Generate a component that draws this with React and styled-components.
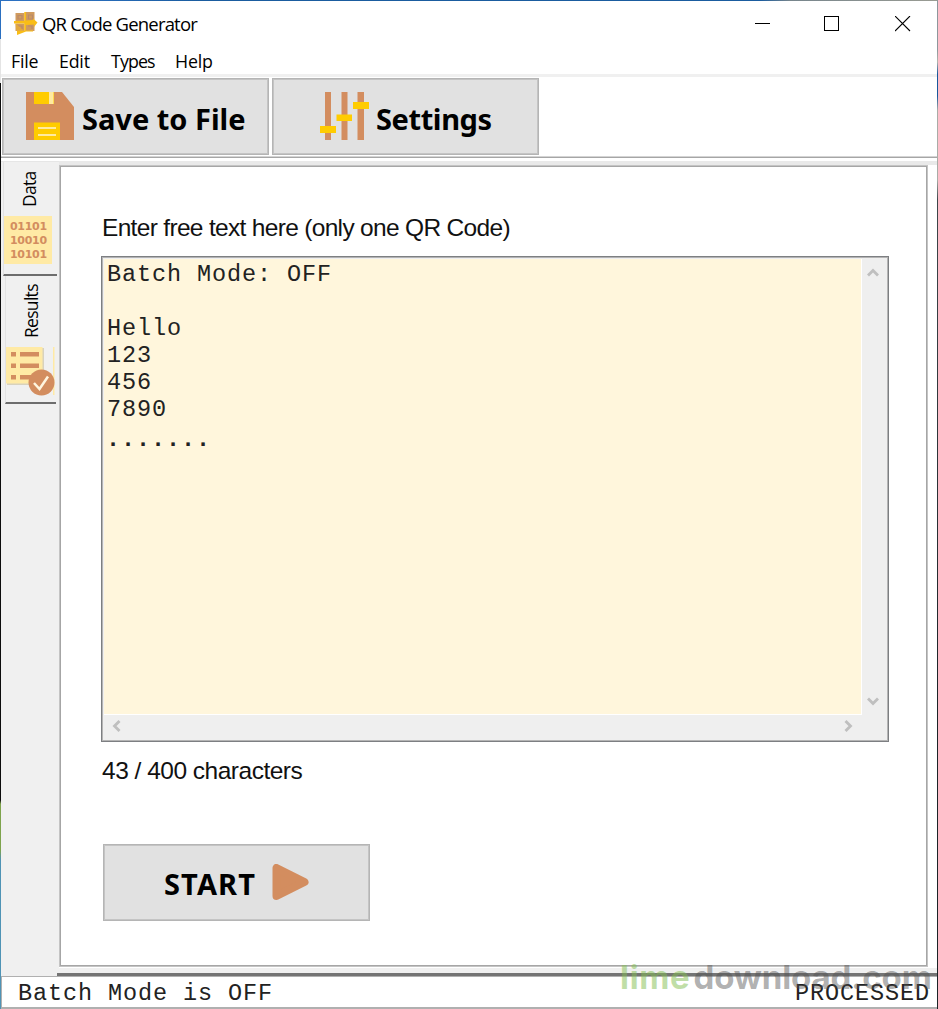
import React from "react";
import styled, { createGlobalStyle } from "styled-components";

const GlobalStyle = createGlobalStyle`
  * {
    box-sizing: border-box;
  }
  body {
    margin: 0;
    overflow: hidden;
  }
`;

const ui = `"Open Sans", "Noto Sans", sans-serif`;
const uiBold = `"Noto Sans", "Open Sans", sans-serif`;
const mono = `"Liberation Mono", "Courier New", monospace`;
const copper = "#d38d5f";
const gold = "#ffcc00";
const sand = "#ffeaa5";

const Desktop = styled.div`
  position: relative;
  width: 938px;
  height: 1009px;
  padding: 1px 1px 0;
  background:
    linear-gradient(
        #2a6fc0 0 39px,
        #e4e4e4 39px 83px,
        #0c0c0c 83px 800px,
        #7ea34c 804px 850px,
        #4f93b5 860px
      )
      left / 1px 100% no-repeat,
    linear-gradient(
        #8d979c 0 50px,
        #b4b5ae 62px,
        #19589b 74px 96px,
        #a9aca7 110px 180px,
        #3c4549 200px,
        #1c2327 700px
      )
      right / 1px 100% no-repeat,
    linear-gradient(90deg, #2b70c1 0 65px, #1a5c9f 200px 760px, #77858c 790px, #9a9c93)
      top / 100% 1px no-repeat;
`;

const Window = styled.div`
  display: flex;
  flex-direction: column;
  height: 100%;
  background: #fff;
  color: #000;
`;

const TitleBar = styled.header`
  display: flex;
  align-items: center;
  height: 46px;
  padding: 0 24px 0 12px;
`;

const Title = styled.h1`
  flex: 1;
  margin: 1px 0 0 4px;
  font: 400 18.5px/26px ${ui};
  letter-spacing: -0.8px;
`;

const WindowButtons = styled.div`
  display: flex;
  gap: 53px;
  padding-right: 2px;

  svg:last-child {
    margin-left: 2px;
  }
`;

const MenuBar = styled.nav`
  display: flex;
  height: 30px;
  padding: 1px 0 0 10px;
  gap: 20px;
  border-bottom: 3px solid #f0f0f0;
`;

const MenuItem = styled.span`
  width: ${(p) => p.$width}px;
  margin-left: ${(p) => p.$shift || 0}px;
  font: 400 17.8px/27px ${ui};
  letter-spacing: ${(p) => p.$tracking || -0.2}px;
  white-space: nowrap;
`;

const ToolBar = styled.div`
  display: flex;
  gap: 3px;
  height: 81px;
  padding: 1px;
  border-bottom: 1px solid #a6a6a6;
  box-shadow: inset 0 -1px #d4d4d4;
`;

const BigButton = styled.button`
  display: flex;
  align-items: center;
  width: 267px;
  height: 77px;
  padding: 0 0 0 ${(p) => p.$inset}px;
  gap: ${(p) => p.$gap}px;
  border: 1px solid #b5b5b5;
  box-shadow: inset 0 0 0 1px #c4c4c4;
  background: #e1e1e1;
  color: #000;
  font: 700 29px/38px ${uiBold};
  letter-spacing: ${(p) => p.$tracking || 0}px;
  white-space: nowrap;

  svg {
    flex: none;
  }
`;

const ButtonText = styled.span`
  padding-top: ${(p) => p.$drop}px;
`;

const Body = styled.div`
  display: flex;
  height: 817px;
  margin-top: 3px;
  background: linear-gradient(#e9e9e9 0 4px, #fff 4px);
`;

const Tabs = styled.aside`
  width: 58px;
  padding-left: 2px;
  background: #f0f0f0;
  border-top: 1px solid #e6e6e6;
`;

const Tab = styled.div`
  display: flex;
  flex-direction: column;
  align-items: flex-start;
  width: ${(p) => p.$width}px;
  height: ${(p) => p.$height}px;
  margin-left: ${(p) => p.$indent}px;
  padding-top: ${(p) => p.$top}px;
  border-left: 1px solid #e2e2e2;
  border-bottom: 2px solid #6d6d6d;
`;

const TabLabel = styled.span`
  height: ${(p) => p.$height}px;
  margin-left: ${(p) => p.$indent}px;
  padding-top: 9px;
  writing-mode: vertical-rl;
  transform: rotate(180deg);
  font: 400 17.5px/24px ${ui};
  letter-spacing: -0.7px;
`;

const Binary = styled.div`
  width: 48px;
  height: 48px;
  padding: 4px 0 0 6px;
  background: ${sand};
  color: ${copper};
  font: 700 11px/14px "DejaVu Sans", sans-serif;
  letter-spacing: -0.3px;
`;

const Content = styled.main`
  flex: 1;
  display: flex;
  flex-direction: column;
`;

const Panel = styled.section`
  width: 869px;
  height: 802px;
  margin-top: 4px;
  padding: 47px 0 0 42px;
  border: 1px solid #c4c4c4;
  box-shadow: inset 0 0 0 1px #a6a6a6;
  background: #fff;
`;

const PanelFoot = styled.div`
  height: 8px;
  margin: 1px 0 0 -2px;
  background: #f0f0f0;
  border-bottom: 3px solid #747474;
`;

const Caption = styled.label`
  display: block;
  padding-top: ${(p) => p.$drop || 0}px;
  font: 400 24.5px/28px "Liberation Sans", Arial, sans-serif;
  letter-spacing: ${(p) => p.$tracking}px;
  color: #111;
`;

const Editor = styled.div`
  display: grid;
  grid-template: 456px 1fr / 758px 1fr;
  width: 788px;
  height: 486px;
  margin: 14px 0 15px -1px;
  padding: 2px;
  border: 1px solid #7d7f82;
  box-shadow: inset 0 0 0 1px #b4b4b4;
  background: #efefef;
`;

const Lines = styled.pre`
  margin: 0;
  padding: 2px 0 0 3px;
  background: #fff6dc;
  border-right: 1px solid #fff;
  border-bottom: 1px solid #fff;
  color: #222;
  font: 400 23.5px/27px ${mono};
  letter-spacing: 0.9px;
`;

const Dots = styled.span`
  position: relative;
  top: 3px;
  left: -1px;
  font-weight: 700;
`;

const VScroll = styled.div`
  display: flex;
  flex-direction: column;
  align-items: center;
  justify-content: space-between;
  padding: 8px 2px 8px 0;
`;

const HScroll = styled.div`
  display: flex;
  align-items: center;
  justify-content: space-between;
  padding: 0 8px 2px 7px;
`;

const StartRow = styled.div`
  margin: 59px 0 0 1px;
`;

const StatusBar = styled.footer`
  display: flex;
  justify-content: space-between;
  height: 33px;
  padding: 2px 7px 0 16px;
  border: 1px solid #b0b0b0;
  border-width: 1px 0 2px 1px;
  font: 400 23.5px/29px ${mono};
  letter-spacing: 0.9px;
  color: #222;
`;

const Watermark = styled.div`
  position: absolute;
  left: 620px;
  top: 954px;
  font: 700 33px/46px Inter, sans-serif;
  letter-spacing: -0.1px;
  color: rgba(80, 80, 80, 0.45);
  white-space: nowrap;

  span {
    color: rgba(130, 190, 80, 0.5);
    margin-right: 3px;
    letter-spacing: 0.7px;
  }
`;

const AppIcon = () => (
  <svg width="25" height="25" viewBox="0 0 25 25">
    <path d="M2.500 2h9v8h-9zM13 1h8.500v9H13zM2.500 12.500h9V20h-9zM13 13h8.500v7H13z" fill="#d09a5e" />
    <path d="M5 4.500h4v3.500H5zM15.500 4h4v4h-4zM5 15h4v3H5zM15 15h4v3" fill="none" stroke="#b98a6a" strokeWidth="1.200" />
    <path d="M11.300 1h1.700v8.500l7-.5V7.500l4.500 4-3.500 4.500v-2.500l-8 .5v5.500h7v1h-7L4 24v-4h7.300v-7.500H1V10h10.300z" fill="#f9bd17" />
    <path d="M2.500 12.500l9 7.500h-8z" fill="#eeb030" opacity="0.700" />
  </svg>
);

const SaveIcon = () => (
  <svg width="48" height="48" viewBox="0 0 48 48">
    <path d="M0 0h36l12 15v33H0z" fill={copper} />
    <path d="M8 0h20v12H8zM8 30.500h26V48H8z" fill={gold} />
    <path d="M23 0h4.500v12H23zM12 35h18v2H12zM12 42h18v2H12z" fill="#ffeaa0" />
  </svg>
);

const SlidersIcon = () => (
  <svg width="49" height="48" viewBox="0 0 49 48">
    <path d="M5 0h6v48H5zM21.500 0h6v48h-6zM37.500 0h6.500v48h-6.500z" fill={copper} />
    <path d="M0 34h16v7H0zM16.500 22.500h15.500v6.500H16.500zM33 10h16v7H33z" fill={gold} />
  </svg>
);

const PlayIcon = () => (
  <svg width="37" height="37" viewBox="0 0 37 37">
    <path
      d="M4.500 4v28L32.500 18z"
      fill={copper}
      stroke={copper}
      strokeWidth="8"
      strokeLinejoin="round"
    />
  </svg>
);

const ResultsIcon = () => (
  <svg width="49" height="49" viewBox="0 0 49 49">
    <path d="M1 1h37v37H1z" fill="#d8d2bd" />
    <path d="M0 0h36.500v36.500H0zM47 0h1.500v48H47z" fill={sand} />
    <path
      d="M5 5h5v4.500H5zM14 5h19v4.500H14zM5 16.500h5v4.500H5zM14 16.500h19v4.500H14zM5 28h5v4.500H5zM14 28h19v4.500H14z"
      fill={copper}
    />
    <circle cx="35.500" cy="35.500" r="13" fill={copper} />
    <path d="M28 36l5.500 6L42 29.500" fill="none" stroke="#fff5df" strokeWidth="2.500" />
  </svg>
);

const Glyph = ({ d, size = 16 }) => (
  <svg width={size} height={size} viewBox="0 0 16 16" fill="none" stroke="#000" shapeRendering="crispEdges">
    <path d={d} />
  </svg>
);

const arrows = {
  up: "M1 8.500L6 3.500 11 8.500",
  down: "M1 3.500L6 8.500 11 3.500",
  left: "M8.500 1L3.500 6 8.500 11",
  right: "M3.500 1L8.500 6 3.500 11",
};

const Arrow = ({ dir }) => (
  <svg width="12" height="12" viewBox="0 0 12 12">
    <path d={arrows[dir]} fill="none" stroke="#bfbfbf" strokeWidth="2.800" />
  </svg>
);

const App = () => {
  return (
    <Desktop>
      <GlobalStyle />
      <Window>
        <TitleBar>
          <AppIcon />
          <Title>QR Code Generator</Title>
          <WindowButtons>
            <Glyph d="M0 7.500h15" />
            <Glyph d="M.5.5h14v14H.5z" />
            <svg width="16" height="16" viewBox="0 0 16 16">
              <path d="M0 0l15 15M15 0l-15 15" stroke="#000" strokeWidth="1.100" />
            </svg>
          </WindowButtons>
        </TitleBar>
        <MenuBar>
          <MenuItem $width={28}>File</MenuItem>
          <MenuItem $width={31}>Edit</MenuItem>
          <MenuItem $width={44} $shift={1} $tracking={-0.9}>
            Types
          </MenuItem>
          <MenuItem $width={38}>Help</MenuItem>
        </MenuBar>
        <ToolBar>
          <BigButton $inset={23} $gap={8}>
            <SaveIcon />
            <ButtonText $drop={5}>Save to File</ButtonText>
          </BigButton>
          <BigButton $inset={47} $gap={7} $tracking={-0.4}>
            <SlidersIcon />
            <ButtonText $drop={5}>Settings</ButtonText>
          </BigButton>
        </ToolBar>
        <Body>
          <Tabs>
            <Tab $width={54} $height={114} $indent={0} $top={8}>
              <TabLabel $height={46} $indent={13}>
                Data
              </TabLabel>
              <Binary>
                01101
                <br />
                10010
                <br />
                10101
              </Binary>
            </Tab>
            <Tab $width={51} $height={128} $indent={2} $top={6}>
              <TabLabel $height={65} $indent={13}>
                Results
              </TabLabel>
              <ResultsIcon />
            </Tab>
          </Tabs>
          <Content>
            <Panel>
              <Caption $tracking={-0.68} $drop={1}>
                Enter free text here (only one QR Code)
              </Caption>
              <Editor>
                <Lines>
                  {"Batch Mode: OFF\n\nHello\n123\n456\n7890\n"}
                  <Dots>.......</Dots>
                </Lines>
                <VScroll>
                  <Arrow dir="up" />
                  <Arrow dir="down" />
                </VScroll>
                <HScroll>
                  <Arrow dir="left" />
                  <Arrow dir="right" />
                </HScroll>
              </Editor>
              <Caption $tracking={-0.5}>43 / 400 characters</Caption>
              <StartRow>
                <BigButton $inset={60} $gap={16} $tracking={1.1}>
                  <ButtonText $drop={3}>START</ButtonText>
                  <PlayIcon />
                </BigButton>
              </StartRow>
            </Panel>
            <PanelFoot />
          </Content>
        </Body>
        <StatusBar>
          <span>Batch Mode is OFF</span>
          <span>PROCESSED</span>
        </StatusBar>
      </Window>
      <Watermark>
        <span>lime</span>download.com
      </Watermark>
    </Desktop>
  );
};

export default App;
